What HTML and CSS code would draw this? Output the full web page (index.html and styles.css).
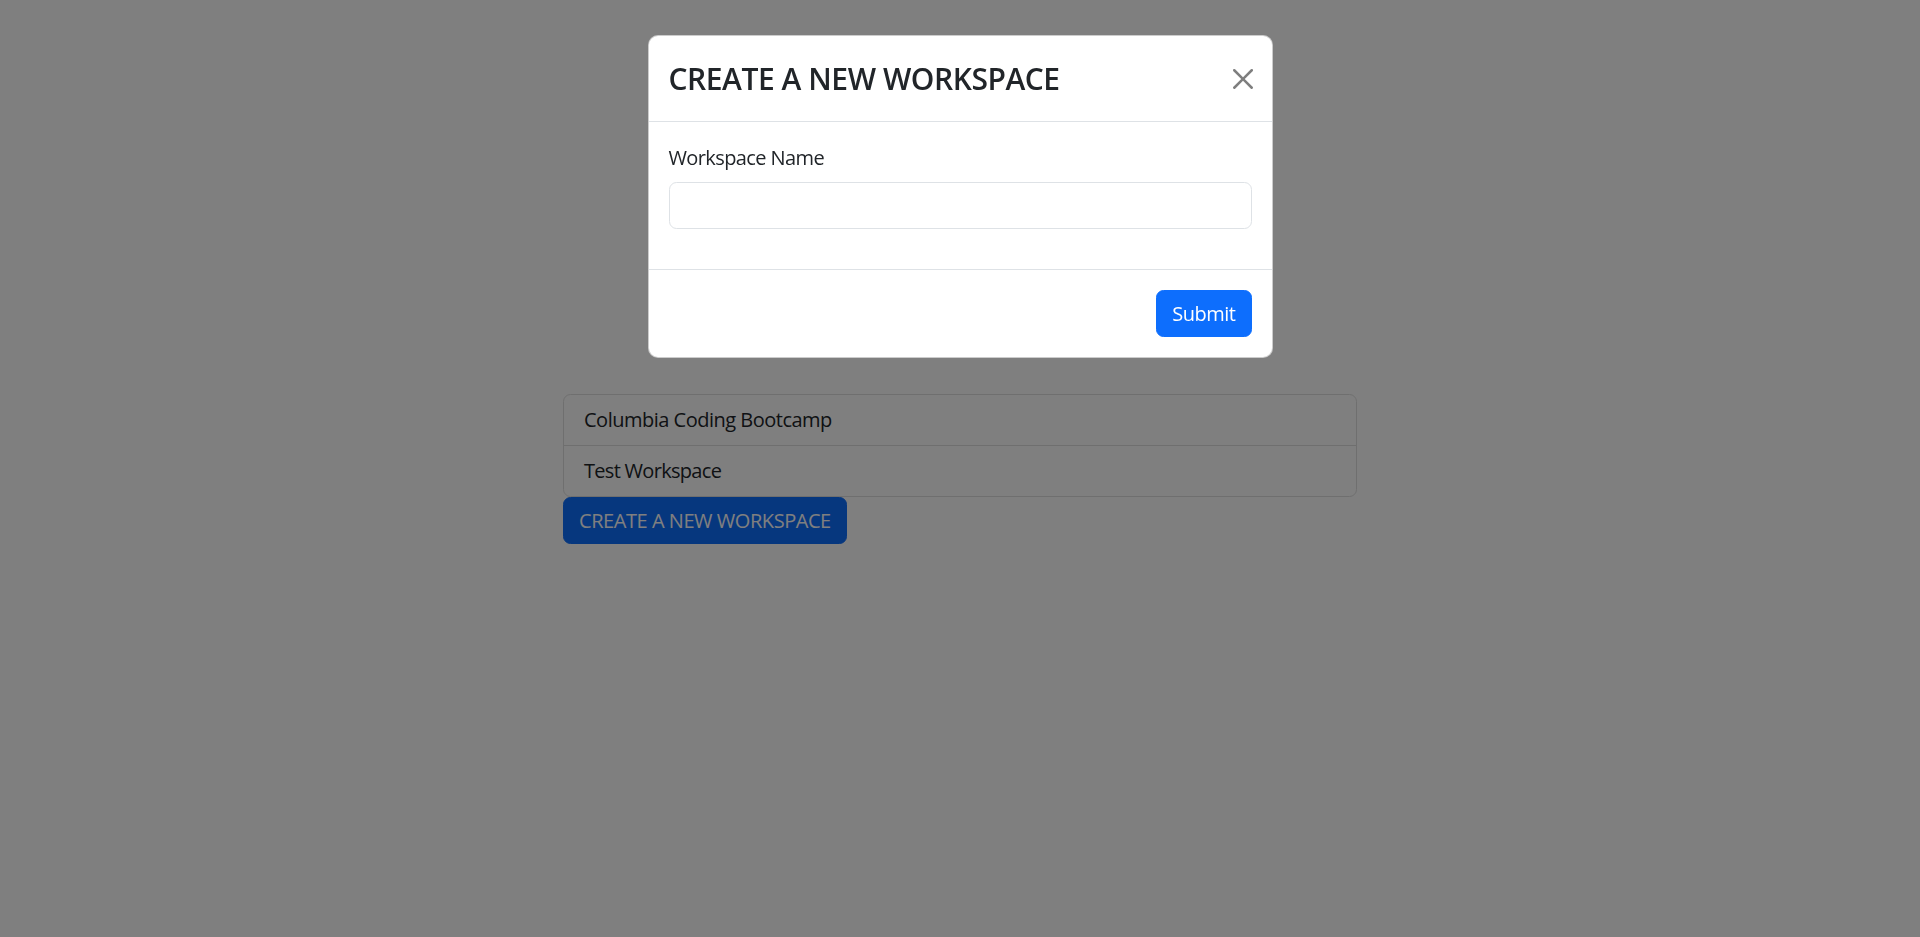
FILE: index.html
```html
<!DOCTYPE html>
<html lang="en">
<head>
<meta charset="utf-8">
<title>Workspaces</title>
<link rel="stylesheet" href="styles.css">
</head>
<body>
<main class="page">
  <ul class="ws-list">
    <li class="ws-item">Columbia Coding Bootcamp</li>
    <li class="ws-item">Test Workspace</li>
  </ul>
  <button class="btn-create" type="button">CREATE A NEW WORKSPACE</button>
</main>
<div class="backdrop"></div>
<div class="modal">
  <div class="dialog">
    <div class="modal-header">
      <h4 class="modal-title">CREATE A NEW WORKSPACE</h4>
      <button class="btn-close" type="button" aria-label="Close">
        <svg viewBox="0 0 16 16" width="20" height="20"><path d="M.293.293a1 1 0 0 1 1.414 0L8 6.586 14.293.293a1 1 0 1 1 1.414 1.414L9.414 8l6.293 6.293a1 1 0 0 1-1.414 1.414L8 9.414l-6.293 6.293a1 1 0 0 1-1.414-1.414L6.586 8 .293 1.707a1 1 0 0 1 0-1.414z" fill="currentColor"/></svg>
      </button>
    </div>
    <div class="modal-body">
      <div class="field">
        <label class="field-label" for="wsname">Workspace Name</label>
        <input class="field-input" id="wsname" type="text">
      </div>
    </div>
    <div class="modal-footer">
      <button class="btn-submit" type="button">Submit</button>
    </div>
  </div>
</div>
</body>
</html>
```
FILE: styles.css
```css
* { box-sizing: border-box; }
html, body { margin: 0; padding: 0; }
body {
  font-family: "Open Sans", "Noto Sans", sans-serif;
  font-size: 20px;
  line-height: 30px;
  color: #212529;
  background: #fff;
  height: 937px;
  overflow: hidden;
}
.page {
  width: 794px;
  margin: 0 auto;
  padding-top: 394px;
}
.ws-list {
  list-style: none;
  margin: 0;
  padding: 0;
  border: 1px solid #dfdfdf;
  border-radius: 7.5px;
  background: #fff;
}
.ws-item {
  padding: 10px 20px;
  line-height: 30px;
  letter-spacing: -0.5px;
}
.ws-item + .ws-item { border-top: 1px solid #dfdfdf; }
.ws-item:last-child { letter-spacing: -0.7px; }
.btn-create {
  display: block;
  margin: 0;
  font: inherit;
  line-height: 30px;
  letter-spacing: -0.45px;
  padding: 7.5px 15px;
  background: #0d6efd;
  color: #fff;
  border: 1px solid #0d6efd;
  border-radius: 7.5px;
}
.backdrop {
  position: fixed;
  inset: 0;
  background: rgba(0, 0, 0, 0.5);
}
.modal {
  position: fixed;
  inset: 0;
}
.dialog {
  width: 625px;
  margin: 35px auto 0;
  background: #fff;
  border: 1px solid rgba(0, 0, 0, 0.2);
  border-radius: 10px;
}
.modal-header {
  display: flex;
  align-items: center;
  justify-content: space-between;
  padding: 20px;
  border-bottom: 1px solid #dee2e6;
}
.modal-title {
  margin: 0;
  font-size: 30px;
  line-height: 45px;
  font-weight: 600;
  letter-spacing: -0.45px;
}
.btn-close {
  display: flex;
  padding: 0;
  margin: 0 -1px 0 0;
  border: 0;
  background: transparent;
  color: #000;
  opacity: 0.5;
  width: 20px;
  height: 20px;
}
.modal-body { padding: 20px; }
.field { margin-bottom: 20px; }
.field-label {
  display: block;
  margin-bottom: 10px;
  letter-spacing: -0.6px;
  position: relative;
  top: 1px;
}
.field-input {
  display: block;
  width: 100%;
  height: 47px;
  padding: 7.5px 15px;
  font: inherit;
  border: 1px solid #dee2e6;
  border-radius: 7.5px;
  background: #fff;
}
.modal-footer {
  display: flex;
  justify-content: flex-end;
  padding: 15px;
  border-top: 1px solid #dee2e6;
}
.btn-submit {
  margin: 5px;
  font: inherit;
  line-height: 29px;
  height: 47px;
  padding: 7.5px 15px;
  background: #0d6efd;
  color: #fff;
  border: 1px solid #0d6efd;
  border-radius: 7.5px;
  letter-spacing: -0.5px;
}
```
